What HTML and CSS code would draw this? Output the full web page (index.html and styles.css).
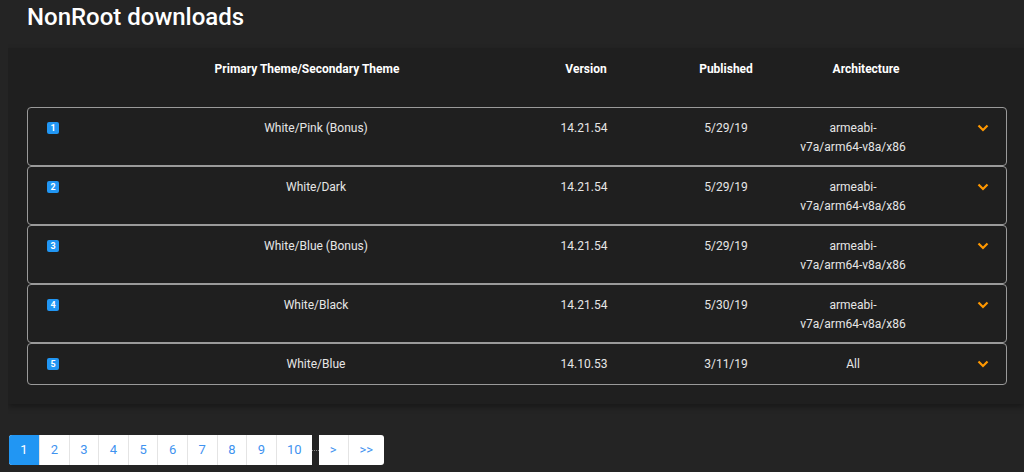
FILE: index.html
```html
<!DOCTYPE html>
<html lang="en">

<head>
    <meta charset="UTF-8">
    <meta name="viewport" content="width=device-width, initial-scale=1.0">
    <title>NonRoot downloads</title>
    <link rel="stylesheet" href="styles.css">
</head>

<body>
    <h1 class="title">NonRoot downloads</h1>
    <section class="card">
        <div class="head">
            <span></span>
            <span>Primary Theme/Secondary Theme</span>
            <span>Version</span>
            <span>Published</span>
            <span>Architecture</span>
        </div>
        <ul class="rows">
            <li class="row">
                <span class="badge">1</span>
                <span>White/Pink (Bonus)</span>
                <span>14.21.54</span>
                <span>5/29/19</span>
                <span class="arch">armeabi-<br>v7a/arm64-v8a/x86</span>
                <span class="toggle"><svg width="12" height="8" viewBox="0 0 12 8"><path d="M1.5 1.5 6 6l4.5-4.5" fill="none" stroke="#ff9800" stroke-width="2.2"/></svg></span>
            </li>
            <li class="row">
                <span class="badge">2</span>
                <span>White/Dark</span>
                <span>14.21.54</span>
                <span>5/29/19</span>
                <span class="arch">armeabi-<br>v7a/arm64-v8a/x86</span>
                <span class="toggle"><svg width="12" height="8" viewBox="0 0 12 8"><path d="M1.5 1.5 6 6l4.5-4.5" fill="none" stroke="#ff9800" stroke-width="2.2"/></svg></span>
            </li>
            <li class="row">
                <span class="badge">3</span>
                <span>White/Blue (Bonus)</span>
                <span>14.21.54</span>
                <span>5/29/19</span>
                <span class="arch">armeabi-<br>v7a/arm64-v8a/x86</span>
                <span class="toggle"><svg width="12" height="8" viewBox="0 0 12 8"><path d="M1.5 1.5 6 6l4.5-4.5" fill="none" stroke="#ff9800" stroke-width="2.2"/></svg></span>
            </li>
            <li class="row">
                <span class="badge">4</span>
                <span>White/Black</span>
                <span>14.21.54</span>
                <span>5/30/19</span>
                <span class="arch">armeabi-<br>v7a/arm64-v8a/x86</span>
                <span class="toggle"><svg width="12" height="8" viewBox="0 0 12 8"><path d="M1.5 1.5 6 6l4.5-4.5" fill="none" stroke="#ff9800" stroke-width="2.2"/></svg></span>
            </li>
            <li class="row">
                <span class="badge">5</span>
                <span>White/Blue</span>
                <span>14.10.53</span>
                <span>3/11/19</span>
                <span class="arch">All</span>
                <span class="toggle"><svg width="12" height="8" viewBox="0 0 12 8"><path d="M1.5 1.5 6 6l4.5-4.5" fill="none" stroke="#ff9800" stroke-width="2.2"/></svg></span>
            </li>
        </ul>
    </section>
    <nav class="pager">
        <div class="pages">
            <a class="page active">1</a>
            <a class="page">2</a>
            <a class="page">3</a>
            <a class="page">4</a>
            <a class="page">5</a>
            <a class="page">6</a>
            <a class="page">7</a>
            <a class="page">8</a>
            <a class="page">9</a>
            <a class="page wide">10</a>
        </div>
        <span class="dots"></span>
        <div class="pages next">
            <a class="page">&gt;</a>
            <a class="page wide">&gt;&gt;</a>
        </div>
    </nav>
</body>

</html>
```

FILE: styles.css
```css
html {
    background: #242424;
}

body {
    margin: 0 0 0 8px;
    color: #e6e6e6;
    font-family: Roboto, "Liberation Sans", Arial, sans-serif;
    font-size: 12px;
    line-height: 19px;
    overflow: hidden;
}

.title {
    margin: 0;
    padding: 3px 0 0 19px;
    height: 48px;
    box-sizing: border-box;
    font-size: 24px;
    line-height: 28px;
    font-weight: 500;
    color: #fff;
}

.card {
    background: #1f1f1f;
    padding: 12px 17px 19px 19px;
    box-shadow: 0 3px 6px rgba(0, 0, 0, 0.35);
}

.head {
    display: grid;
    grid-template-columns: 73px 374px 184px 96px 184px 1fr;
    padding-left: 20px;
    margin-bottom: 28px;
    font-weight: 700;
    color: #fff;
    text-align: center;
}

.rows {
    list-style: none;
    margin: 0;
    padding: 0;
}

.row {
    display: grid;
    grid-template-columns: 83px 372px 164px 120px 134px 1fr;
    align-items: start;
    padding: 11px 17px 8px 19px;
    border: 1px solid #9a9a9a;
    border-radius: 4px;
    text-align: center;
}

.badge {
    justify-self: start;
    width: 12px;
    height: 12px;
    margin-top: 3px;
    border-radius: 2px;
    background: #2196f3;
    color: #fff;
    font-size: 9px;
    font-weight: 700;
    line-height: 12px;
}

.toggle {
    justify-self: end;
    height: 21px;
    padding-top: 5px;
    box-sizing: border-box;
}

.toggle svg {
    display: block;
}

.pager {
    display: flex;
    align-items: center;
    margin-top: 31px;
    margin-left: 1px;
}

.pages {
    display: flex;
    background: #fff;
    border-radius: 3px 0 0 3px;
    overflow: hidden;
}

.pages.next {
    border-radius: 0 3px 3px 0;
}

.page {
    width: 29.6px;
    height: 30px;
    line-height: 30px;
    text-align: center;
    color: #3f93f0;
    font-size: 13px;
    border-left: 1px solid #e4e4e4;
    box-sizing: border-box;
}

.page:first-child {
    border-left: 0;
    width: 30px;
}

.page.wide {
    width: 36px;
}

.next .page:first-child {
    width: 29px;
}

.page.active {
    background: #2196f3;
    color: #fff;
}

.dots {
    width: 7px;
    border-top: 1px dotted #8a8a8a;
}
```
